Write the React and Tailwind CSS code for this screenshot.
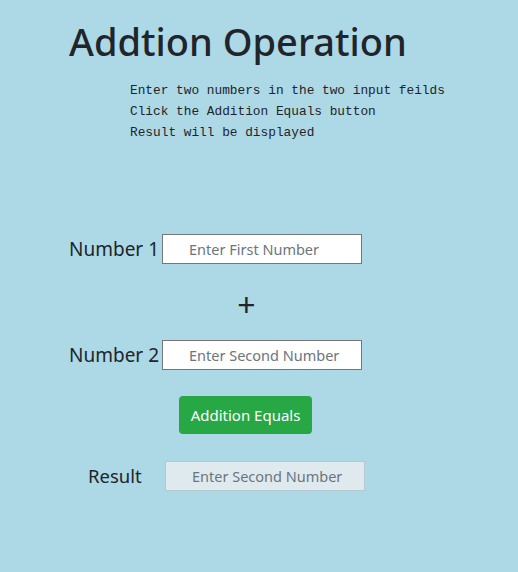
// Addition page: heading, mono instructions, two number inputs, a button and a disabled result box.

const sans = { fontFamily: '"Noto Sans", "Open Sans", sans-serif' }

function Row({ label, placeholder }) {
  return (
    <div className="flex h-[30px] items-center">
      <label className="w-[93px] whitespace-nowrap text-[19px] leading-none text-[#212529]">{label}</label>
      <input
        className="h-[30px] w-[200px] border border-[#767676] bg-white pl-[26px] pr-[2px] text-[14.5px] text-[#212529] placeholder:text-[#6c757d] outline-none"
        placeholder={placeholder}
      />
    </div>
  )
}

export default function App() {
  return (
    <div className="min-h-[572px] w-[518px] bg-[#add8e6] pl-[69px]" style={sans}>
      <h1 className="pt-[17px] text-[38px] font-medium leading-[48px] text-[#212529]">Addtion Operation</h1>
      <div
        className="mt-[15px] pl-[61px] text-[12.8px] leading-[21px] text-[#212529]"
        style={{ fontFamily: '"Liberation Mono", "DejaVu Sans Mono", monospace' }}
      >
        <div>Enter two numbers in the two input feilds</div>
        <div>Click the Addition Equals button</div>
        <div>Result will be displayed</div>
      </div>

      <div className="mt-[91px] flex flex-col">
        <Row label="Number 1" placeholder="Enter First Number" />
        <div className="flex h-[76px] w-[355px] items-center justify-center pt-[5px] text-[32px] leading-none text-[#212529]">
          +
        </div>
        <Row label="Number 2" placeholder="Enter Second Number" />
        <div className="mt-[26px] flex w-[353px] justify-center">
          <button className="h-[38px] rounded-[4px] bg-[#28a745] px-[12px] text-[15px] text-white">
            Addition Equals
          </button>
        </div>
        <div className="mt-[27px] flex h-[30px] items-center pl-[19px]">
          <span className="w-[77px] text-[18.5px] leading-none text-[#212529]">Result</span>
          <input
            disabled
            className="h-[30px] w-[200px] border border-[#b5c9d0] bg-[#dfeaef] pl-[26px] pr-[2px] text-[14.5px] placeholder:text-[#6c757d] outline-none"
            placeholder="Enter Second Number"
          />
        </div>
      </div>
    </div>
  )
}
